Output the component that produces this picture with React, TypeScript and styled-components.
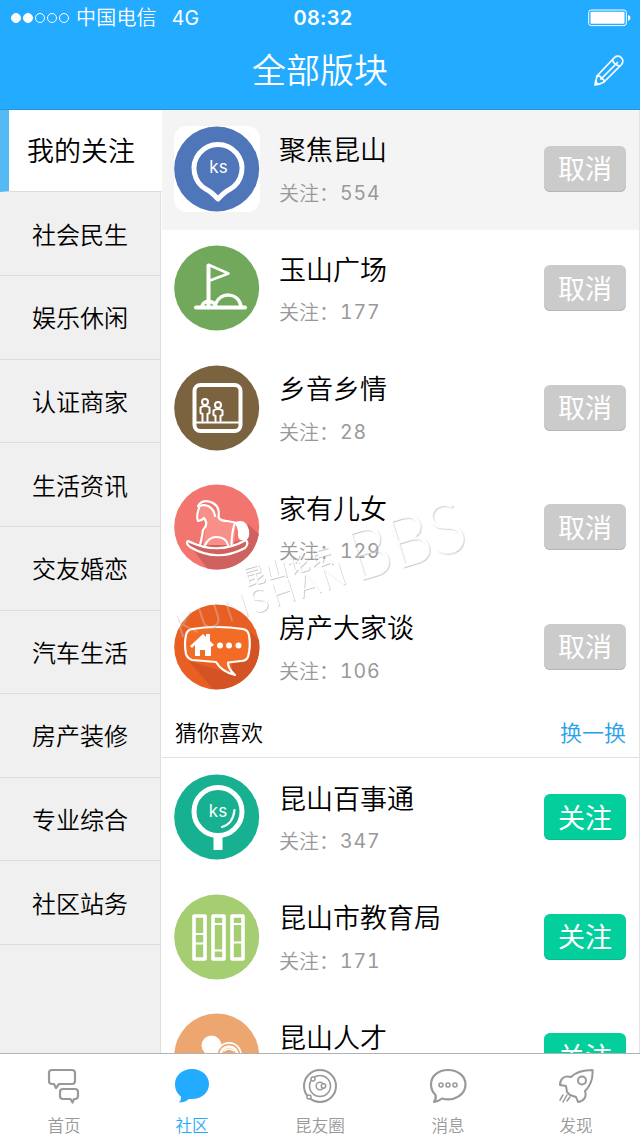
import React from "react";
import styled, { createGlobalStyle } from "styled-components";

const cjk = `"Noto Sans CJK SC", sans-serif`;

const GlobalStyle = createGlobalStyle`
  * { box-sizing: border-box; }
  body { margin: 0; background: #fff; font-family: ${cjk}; }
`;

const Screen = styled.div`
  position: relative;
  width: 640px;
  height: 1138px;
  display: flex;
  flex-direction: column;
  overflow: hidden;
  background: #fff;
  color: #000;
  font-weight: 350;
`;

const Header = styled.header`
  flex: none;
  height: 110px;
  background: #22abff;
  border-bottom: 1px solid #2e93cf;
  color: #fff;
`;

const StatusBar = styled.div`
  display: grid;
  grid-template-columns: 1fr auto 1fr;
  align-items: center;
  height: 36px;
  padding: 0 9px 0 11px;
  font-family: Inter, ${cjk};
  font-size: 20px;
`;

const Carrier = styled.div`
  display: flex;
  align-items: center;
  line-height: 30px;
  letter-spacing: 0.2px;
`;

const Signal = styled.div`
  display: flex;
  gap: 2px;
  margin-right: 7px;
`;

const Dot = styled.span<{ $on?: boolean }>`
  width: 10px;
  height: 10px;
  border-radius: 50%;
  border: 1px solid #fff;
  background: ${(p) => (p.$on ? "#fff" : "transparent")};
`;

const Network = styled.span`
  margin-left: 15px;
  font-size: 19.5px;
  font-weight: 400;
`;

const Clock = styled.div`
  font-weight: 600;
  letter-spacing: 0.3px;
  padding-left: 4px;
`;

const BatteryIcon = styled.svg`
  justify-self: end;
`;

const TitleBar = styled.div`
  display: grid;
  grid-template-columns: 60px 1fr 60px;
  align-items: center;
  height: 68px;
`;

const Title = styled.h1`
  grid-column: 2;
  margin: 0;
  padding-bottom: 3px;
  text-align: center;
  font-size: 34px;
  line-height: 50px;
  font-weight: 350;
`;

const EditButton = styled.button`
  display: flex;
  justify-content: center;
  padding: 0 3px 0 0;
  border: 0;
  background: none;
  color: #fff;
`;

const Main = styled.main`
  flex: 1;
  min-height: 0;
  display: flex;
`;

const Sidebar = styled.nav`
  flex: none;
  width: 162px;
  background: linear-gradient(to right, #f0f0f0 160px, #dedede 160px, #dedede 161px, #fff 161px);
`;

const SideItem = styled.div<{ $active?: boolean }>`
  display: flex;
  align-items: center;
  justify-content: center;
  width: ${(p) => (p.$active ? 162 : 160)}px;
  height: ${(p) => (p.$active ? 82.4 : 83.63)}px;
  padding: ${(p) => (p.$active ? "0 9px 2px 0" : "0")};
  font-size: ${(p) => (p.$active ? 27 : 24)}px;
  line-height: 36px;
  background: ${(p) => (p.$active ? "#fff" : "#f0f0f0")};
  border-left: ${(p) => (p.$active ? "9px solid #55b9f3" : "0")};
  border-bottom: 1px solid #dcdcdc;
`;

const Content = styled.section`
  flex: 1;
  min-width: 0;
  overflow: hidden;
  border-right: 1px solid #e4e4e4;
`;

const Row = styled.article<{ $selected?: boolean; $follow?: boolean }>`
  display: flex;
  align-items: center;
  height: 119.5px;
  padding: 0 13px ${(p) => (p.$follow ? 0 : 2)}px 12px;
  background: ${(p) => (p.$selected ? "#f4f4f4" : "#fff")};
`;

const Avatar = styled.div`
  flex: none;
  width: 86px;
  height: 86px;
  border-radius: 13px;
  background: #fff;
  svg { display: block; }
`;

const Info = styled.div`
  flex: 1;
  margin-left: 19px;
  padding-bottom: 1px;
`;

const Name = styled.div`
  font-size: 27px;
  line-height: 40px;
`;

const Followers = styled.div`
  display: flex;
  margin-top: 8.5px;
  font-size: 20px;
  line-height: 30px;
  color: #999;
`;

const Count = styled.span`
  font-family: Inter, sans-serif;
  font-variant-numeric: tabular-nums;
  font-weight: 400;
  font-size: 19.5px;
  letter-spacing: 0.8px;
  margin-left: 1px;
`;

const ActionButton = styled.button<{ $follow?: boolean }>`
  flex: none;
  width: 82px;
  height: 46px;
  padding: 0 0 1px;
  border: 0;
  border-radius: 6px;
  background: ${(p) => (p.$follow ? "#03cf9c" : "#cbcbcb")};
  box-shadow: inset 0 -1px 0 ${(p) => (p.$follow ? "#0bb98e" : "#b5b5b5")};
  color: #fff;
  font-family: ${cjk};
  font-size: 27px;
  font-weight: 400;
  line-height: 40px;
`;

const SectionHeader = styled.div`
  display: flex;
  align-items: center;
  justify-content: space-between;
  height: 50px;
  padding: 0 13px 3px;
  border-bottom: 1px solid #e0e0e0;
  font-size: 22px;
  line-height: 32px;
`;

const Refresh = styled.a`
  color: #27a2ea;
`;

const TabBar = styled.footer`
  flex: none;
  display: grid;
  grid-template-columns: repeat(5, 1fr);
  height: 85px;
  border-top: 1px solid #b2b2b2;
  background: #fff;
`;

const Tab = styled.div<{ $active?: boolean }>`
  display: flex;
  flex-direction: column;
  align-items: center;
  padding-top: 14px;
  color: ${(p) => (p.$active ? "#22abff" : "#999")};
  font-size: 16.6px;
  line-height: 24px;
  svg { margin-bottom: 9px; }
`;

const Watermark = styled.svg`
  position: absolute;
  left: 162px;
  top: 480px;
  pointer-events: none;
`;

const stroke = {
  fill: "none",
  stroke: "#fff",
  strokeLinecap: "round" as const,
  strokeLinejoin: "round" as const,
};

const Badge = ({ color, children }: { color: string; children: React.ReactNode }) => (
  <svg width="86" height="86" viewBox="0 0 86 86">
    <circle cx="42.700" cy="43" r="42.500" fill={color} />
    {children}
  </svg>
);

const KsLabel = () => (
  <text x="44.500" y="46.500" textAnchor="middle" fill="#fff" fontFamily="Inter, sans-serif" fontWeight="400" fontSize="17">ks</text>
);

const PinBadge = () => (
  <Badge color="#4f76b8">
    <path {...stroke} strokeWidth="5" d="M32.500 63.500A24 24 0 1 1 55.500 63.500Q51 65.500 44 73Q37 65.500 32.500 63.500Z" />
    <KsLabel />
  </Badge>
);

const FlagBadge = () => (
  <Badge color="#72a85c">
    <g {...stroke}>
      <path strokeWidth="4" d="M34.500 60V20.500" />
      <path strokeWidth="2.500" d="M35 20L54.500 28.500L36 35.500" />
      <path strokeWidth="4" d="M22 62.500H71" />
      <path strokeWidth="3.500" d="M28 61C30 55 39 55 42 61M42 58C47 47 64 47 67 61" />
    </g>
  </Badge>
);

const FamilyBadge = () => (
  <Badge color="#7b6340">
    <g {...stroke}>
      <rect x="20.500" y="20" width="46" height="46" rx="6" strokeWidth="4" />
      <path strokeWidth="2" d="M22 57.500H65" />
      <g strokeWidth="2">
        <circle cx="31" cy="37" r="3" />
        <path d="M28.500 56V49L26.500 48V42.500Q31 39.500 35.500 42.500V48L33.500 49V56" />
        <circle cx="44" cy="40" r="3" />
        <path d="M41.500 56V51L39.500 50V45.500Q44 42.500 48.500 45.500V50L46.500 51V56" />
      </g>
    </g>
  </Badge>
);

const HorseBadge = () => (
  <Badge color="#f27570">
    <path fill="#cf625e" d="M15 60L33 84.200A42.500 42.500 0 0 0 85 50L74 40L67 57Z" />
    <path fill="#f98f89" d="M26 24Q39 15 44 34L62 39L60 61H29L33 36L25 38Z" />
    <g {...stroke} strokeWidth="2.200">
      <path d="M24 22Q29 14 39 19Q46 23 44.500 33Q46 37 53 37L61 38.500Q58 47 57.500 60" />
      <path d="M25 23Q28 20 34 22Q40 25 41 32" />
      <path d="M25 24Q22 33 24 37Q27 37 30 34Q35 40 29 46Q28 54 26 61" />
      <path d="M31 61Q35 53 42 53Q52 53 54 61" />
      <path d="M14 57Q11 59 16 63Q43 79 71 64Q75 60 72 56Q44 72 14 57Z" />
      <path fill="#fff" d="M62 39Q71 35 74 47Q75 54 71 55Q65 56 65 51Q66 46 62 39Z" />
    </g>
  </Badge>
);

const HouseBadge = () => (
  <Badge color="#e95f23">
    <path fill="#d35325" d="M15 57L39 85A42.500 42.500 0 0 0 85 36L74 26V55L58 60V70Z" />
    <path {...stroke} fill="#f26c25" strokeWidth="2.200" d="M18 25Q43 21 69 25Q74 26 75 31Q77 42 74 53Q72 57 67 57L54 58.500Q54 65 61 71Q48 68 42 58L18 56Q13 54 12 50Q10 40 12 31Q13 26 18 25Z" />
    <path fill="#fff" d="M16 42L29 30L32 33V30H36V37L40 41L37 43V52H31V46H26V52H21V41L18 44Z" />
    <g fill="#fff">
      <circle cx="46" cy="41.500" r="3" />
      <circle cx="55" cy="41.500" r="3" />
      <circle cx="64.500" cy="41.500" r="3" />
    </g>
  </Badge>
);

const LensBadge = () => (
  <Badge color="#17b191">
    <circle cx="44" cy="37.500" r="24" fill="none" stroke="#fff" strokeWidth="5" />
    <path fill="#fff" d="M39.500 60H48.500V76H39.500Z" />
    <path {...stroke} strokeWidth="2.200" d="M60.500 36Q59 50 48 53" />
    <g transform="translate(-.5 -4)"><KsLabel /></g>
  </Badge>
);

const BooksBadge = () => (
  <Badge color="#a5cd71">
    <g {...stroke} strokeWidth="3.600">
      <rect x="20" y="22" width="11" height="43" />
      <rect x="39" y="22" width="11" height="43" />
      <rect x="58" y="22" width="11" height="43" />
      <path strokeWidth="2.200" d="M20 40H31M20 49.500H31M39 30H50M39 56.500H50M58 30H69M58 48.500H69" />
    </g>
  </Badge>
);

const TalentBadge = () => (
  <Badge color="#eda66f">
    <circle cx="37.500" cy="32.500" r="10" fill="#fff" />
    <circle cx="55" cy="42" r="13" fill="#fff" />
    <circle cx="55" cy="42" r="10.500" fill="none" stroke="#eda66f" strokeWidth="1.500" />
    <circle cx="55" cy="42" r="7" fill="#eda66f" />
    <path {...stroke} strokeWidth="1.500" d="M50 38Q55 34 60 38" />
  </Badge>
);

const PencilIcon = () => (
  <svg width="34" height="34" viewBox="0 0 34 34" {...stroke} strokeWidth="1.700">
    <path d="M3 32L5 23L22 5C26 0 34 6 29.500 11.500L12 29Q7 32 3 32Z" />
    <path d="M5 23Q9.500 22.500 9 26Q12.500 25.500 12 29M20.500 7Q22 12 28 13M9 26L25.500 9.500M3.500 28.500L6 31" />
  </svg>
);

const line = { ...stroke, stroke: "currentColor" };

const HomeIcon = () => (
  <svg width="36" height="36" viewBox="0 0 36 36" {...line} strokeWidth="2.200">
    <path d="M6 2H26Q29 2 29 5V13Q29 16 26 16H13L10 20L8 16H6Q3 16 3 13V5Q3 2 6 2Z" />
    <path d="M17 21H29Q32 21 32 24V28Q32 31 29 31H28L26.500 34.500L24.500 31H17Q14 31 14 28V24Q14 21 17 21Z" />
  </svg>
);

const CommunityIcon = () => (
  <svg width="36" height="36" viewBox="0 0 36 36">
    <path fill="currentColor" d="M18 1C8.500 1 1 7.500 1 16C1 22 3.500 26 7 28.500Q7.500 32 5 34.500Q11 34.500 15 31C27 32 35 25 35 16C35 7.500 27.500 1 18 1Z" />
  </svg>
);

const OrbitIcon = () => (
  <svg width="36" height="36" viewBox="0 0 36 36" {...line} strokeWidth="1.500">
    <circle cx="18" cy="18" r="16" strokeWidth="2" />
    <circle cx="18" cy="18" r="10.500" />
    <circle cx="18" cy="18" r="3.800" />
    <g fill="#fff">
      <circle cx="21.500" cy="18" r="2.200" />
      <circle cx="11" cy="11" r="2" />
      <circle cx="7" cy="29" r="2" />
    </g>
  </svg>
);

const MessageIcon = () => (
  <svg width="38" height="36" viewBox="0 0 38 36" {...line} strokeWidth="2.200">
    <path d="M19 2C9 2 2 8 2 16.500C2 21 3.500 24 6.500 27Q7.500 31 5 34Q10 33 13 30.500C26 34 36.500 26 36.500 16.500C36.500 8 29 2 19 2Z" />
    <g strokeWidth="1.600">
      <circle cx="12" cy="17" r="2" />
      <circle cx="19" cy="17" r="2" />
      <circle cx="26" cy="17" r="2" />
    </g>
  </svg>
);

const RocketIcon = () => (
  <svg width="36" height="36" viewBox="0 0 36 36" {...line} strokeWidth="2">
    <path d="M13 9C19 3 27 2 34.500 2C35 9 33 17 27 23C29 29 26 33 20 34L18 29L12 27L9 24L8 18L2 17C2 11 6 7 13 9Z" />
    <circle cx="24" cy="12.500" r="4" />
    <path strokeWidth="1.500" d="M5 27L2 32M9 27L5 34M12 29L9 33" />
  </svg>
);

const categories = ["我的关注", "社会民生", "娱乐休闲", "认证商家", "生活资讯", "交友婚恋", "汽车生活", "房产装修", "专业综合", "社区站务"];

const followed = [
  { name: "聚焦昆山", count: 554, Icon: PinBadge },
  { name: "玉山广场", count: 177, Icon: FlagBadge },
  { name: "乡音乡情", count: 28, Icon: FamilyBadge },
  { name: "家有儿女", count: 129, Icon: HorseBadge },
  { name: "房产大家谈", count: 106, Icon: HouseBadge },
];

const suggested = [
  { name: "昆山百事通", count: 347, Icon: LensBadge },
  { name: "昆山市教育局", count: 171, Icon: BooksBadge },
  { name: "昆山人才", Icon: TalentBadge },
];

const tabs = [
  { label: "首页", Icon: HomeIcon },
  { label: "社区", Icon: CommunityIcon },
  { label: "昆友圈", Icon: OrbitIcon },
  { label: "消息", Icon: MessageIcon },
  { label: "发现", Icon: RocketIcon },
];

type Board = { name: string; count?: number; Icon: React.ComponentType };

const BoardRow = ({ board, selected, follow }: { board: Board; selected?: boolean; follow?: boolean }) => (
  <Row $selected={selected} $follow={follow}>
    <Avatar><board.Icon /></Avatar>
    <Info>
      <Name>{board.name}</Name>
      <Followers>关注：<Count>{board.count}</Count></Followers>
    </Info>
    <ActionButton $follow={follow}>{follow ? "关注" : "取消"}</ActionButton>
  </Row>
);

export default function App() {
  return (
    <Screen>
      <GlobalStyle />
      <Header>
        <StatusBar>
          <Carrier>
            <Signal><Dot $on /><Dot $on /><Dot /><Dot /><Dot /></Signal>
            中国电信
            <Network>4G</Network>
          </Carrier>
          <Clock>08:32</Clock>
          <BatteryIcon width="43" height="18" viewBox="0 0 43 18">
            <rect x=".7" y="1" width="37.600" height="15.600" rx="2.500" fill="none" stroke="#fff" />
            <rect x="2.500" y="2.800" width="34" height="12" rx="1" fill="#fff" />
            <path d="M40 6Q42.500 6.500 42.500 9Q42.500 11 40 12Z" fill="#fff" />
          </BatteryIcon>
        </StatusBar>
        <TitleBar>
          <Title>全部版块</Title>
          <EditButton aria-label="编辑"><PencilIcon /></EditButton>
        </TitleBar>
      </Header>
      <Main>
        <Sidebar>
          {categories.map((label, i) => <SideItem key={label} $active={i === 0}>{label}</SideItem>)}
        </Sidebar>
        <Content>
          {followed.map((board, i) => <BoardRow key={board.name} board={board} selected={i === 0} />)}
          <SectionHeader>猜你喜欢<Refresh>换一换</Refresh></SectionHeader>
          {suggested.map((board) => <BoardRow key={board.name} board={board} follow />)}
        </Content>
      </Main>
      <TabBar>
        {tabs.map(({ label, Icon }, i) => <Tab key={label} $active={i === 1}><Icon />{label}</Tab>)}
      </TabBar>
      <Watermark width="320" height="170" viewBox="0 0 320 170">
        <defs>
          <filter id="emboss" x="-5%" y="-5%" width="110%" height="115%">
            <feOffset in="SourceAlpha" dx="1.200" dy="1" />
            <feGaussianBlur stdDeviation=".6" />
            <feComposite in2="SourceAlpha" operator="out" result="edge" />
            <feFlood floodColor="#999" floodOpacity=".5" />
            <feComposite in2="edge" operator="in" result="shade" />
            <feComponentTransfer in="SourceGraphic" result="face">
              <feFuncA type="linear" slope=".25" />
            </feComponentTransfer>
            <feMerge>
              <feMergeNode in="shade" />
              <feMergeNode in="face" />
            </feMerge>
          </filter>
        </defs>
        <g filter="url(#emboss)" fill="#fff" fontFamily="Lato, sans-serif" fontWeight="300">
          <text transform="translate(17 158) rotate(-18)" fontSize="32" textLength="178">KUNSHAN</text>
          <text transform="translate(83 106) rotate(-15)" fontFamily={cjk} fontWeight="400" fontSize="22" textLength="92">昆山论坛</text>
          <text transform="translate(194 102) rotate(-17)" fontSize="70" textLength="120" lengthAdjust="spacingAndGlyphs">BBS</text>
        </g>
      </Watermark>
    </Screen>
  );
}
